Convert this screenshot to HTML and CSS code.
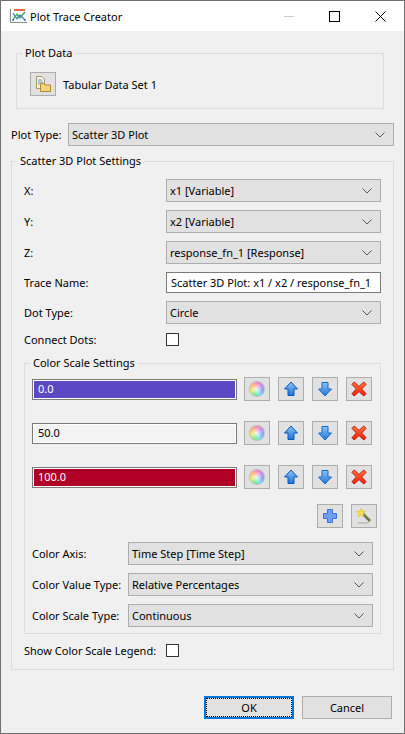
FILE: index.html
```html
<!DOCTYPE html>
<html lang="en">
<head>
<meta charset="utf-8">
<title>Plot Trace Creator</title>
<link rel="stylesheet" href="styles.css">
</head>
<body>
<svg class="defs" width="0" height="0" aria-hidden="true">
  <defs>
    <linearGradient id="blue" x1="0" y1="0" x2="0" y2="1"><stop offset="0" stop-color="#8cc4f4"/><stop offset="1" stop-color="#1e76d8"/></linearGradient>
    <linearGradient id="red" x1="0" y1="0" x2="0" y2="1"><stop offset="0" stop-color="#ff7a3c"/><stop offset="1" stop-color="#f01a08"/></linearGradient>
    <symbol id="up" viewBox="0 0 16 16"><path d="M8 1 L14.5 8 H11 V14.5 H5 V8 H1.5 Z" fill="url(#blue)" stroke="#0a55b8" stroke-width="1"/></symbol>
    <symbol id="down" viewBox="0 0 16 16"><path d="M5 1.5 H11 V8 H14.5 L8 15 L1.5 8 H5 Z" fill="url(#blue)" stroke="#1668c8" stroke-width="1"/></symbol>
    <symbol id="del" viewBox="0 0 16 16"><path d="M3.2 1 L8 5.4 L12.8 1 L15 3.4 L10.6 8 L15 12.6 L12.8 15 L8 10.6 L3.2 15 L1 12.6 L5.4 8 L1 3.4 Z" fill="url(#red)" stroke="#c01808" stroke-width="1"/></symbol>
    <symbol id="chev" viewBox="0 0 10 6"><path d="M0.5 0.5 L5 5 L9.5 0.5" fill="none" stroke="#555" stroke-width="1"/></symbol>
  </defs>
</svg>
<div class="window">
  <header class="titlebar">
    <svg class="appicon" viewBox="0 0 17 16" width="17" height="16">
      <path d="M0.5 1 V14.5 H17" fill="none" stroke="#8a8a8a"/>
      <path d="M3 12 L7 6 L10 10 L15 4" fill="none" stroke="#3fa34d" stroke-width="1.3"/>
      <path d="M3 5 L7 11 L10 7 L15 12" fill="none" stroke="#3f82d0" stroke-width="1.3"/>
      <path d="M4 2 H15" stroke="#e0442c" stroke-width="1.6"/>
      <circle cx="3" cy="12" r="1" fill="#2f78c8"/>
      <circle cx="8.5" cy="8.5" r="1" fill="#3fa34d"/>
      <circle cx="15" cy="12" r="1" fill="#2f78c8"/>
    </svg>
    <span class="title">Plot Trace Creator</span>
    <svg class="winbtn min" viewBox="0 0 10 10" width="10" height="10"><path d="M0 5.5 H10" stroke="#ccc"/></svg>
    <svg class="winbtn max" viewBox="0 0 11 11" width="11" height="11"><rect x="0.5" y="0.5" width="10" height="10" fill="none" stroke="#000"/></svg>
    <svg class="winbtn close" viewBox="0 0 11 11" width="11" height="11"><path d="M0.5 0.5 L10.5 10.5 M10.5 0.5 L0.5 10.5" stroke="#000" fill="none"/></svg>
  </header>

  <main class="content">
    <section class="group data-group">
      <span class="legend">Plot Data</span>
      <div class="data-row">
        <button class="btn">
          <svg viewBox="0 0 16 16" width="16" height="16">
            <path d="M1.5 0.5 H7 L9.5 3 V12.5 H1.5 Z" fill="#f6f2e6" stroke="#a89868"/>
            <path d="M3 4 H7 M3 6 H8 M3 8 H6" stroke="#6a94c8"/>
            <path d="M5.5 7.5 H9 L10 9 H15.5 V15.5 H5.5 Z" fill="#f6d27a" stroke="#b8862c"/>
          </svg>
        </button>
        <span>Tabular Data Set 1</span>
      </div>
    </section>

    <div class="type-row">
      <span class="type-label">Plot Type:</span>
      <div class="combo grow"><span>Scatter 3D Plot</span><svg class="chev"><use href="#chev"/></svg></div>
    </div>

    <section class="group settings">
      <span class="legend">Scatter 3D Plot Settings</span>
      <div class="form">
        <span>X:</span>
        <div class="combo"><span>x1 [Variable]</span><svg class="chev"><use href="#chev"/></svg></div>
        <span>Y:</span>
        <div class="combo"><span>x2 [Variable]</span><svg class="chev"><use href="#chev"/></svg></div>
        <span>Z:</span>
        <div class="combo"><span>response_fn_1 [Response]</span><svg class="chev"><use href="#chev"/></svg></div>
        <span>Trace Name:</span>
        <div class="textbox">Scatter 3D Plot: x1 / x2 / response_fn_1</div>
        <span>Dot Type:</span>
        <div class="combo"><span>Circle</span><svg class="chev"><use href="#chev"/></svg></div>
        <span>Connect Dots:</span>
        <div class="check"></div>
      </div>

      <section class="group scale">
        <span class="legend">Color Scale Settings</span>
        <div class="stops">
          <div class="stop">
            <div class="swatch purple">0.0</div>
            <button class="btn"><i class="wheel"></i></button>
            <button class="btn"><svg class="ico"><use href="#up"/></svg></button>
            <button class="btn"><svg class="ico"><use href="#down"/></svg></button>
            <button class="btn"><svg class="ico"><use href="#del"/></svg></button>
          </div>
          <div class="stop">
            <div class="swatch plain">50.0</div>
            <button class="btn"><i class="wheel"></i></button>
            <button class="btn"><svg class="ico"><use href="#up"/></svg></button>
            <button class="btn"><svg class="ico"><use href="#down"/></svg></button>
            <button class="btn"><svg class="ico"><use href="#del"/></svg></button>
          </div>
          <div class="stop">
            <div class="swatch crimson">100.0</div>
            <button class="btn"><i class="wheel"></i></button>
            <button class="btn"><svg class="ico"><use href="#up"/></svg></button>
            <button class="btn"><svg class="ico"><use href="#down"/></svg></button>
            <button class="btn"><svg class="ico"><use href="#del"/></svg></button>
          </div>
        </div>
        <div class="scale-actions">
          <button class="btn">
            <svg viewBox="0 0 16 16" width="16" height="16"><path d="M5.5 1.5 H10.5 V5.5 H14.5 V10.5 H10.5 V14.5 H5.5 V10.5 H1.5 V5.5 H5.5 Z" fill="#6c9ff0" stroke="#3c72d8"/></svg>
          </button>
          <button class="btn">
            <svg viewBox="0 0 16 16" width="16" height="16">
              <path d="M2 15 H13" stroke="#bdbdb0" stroke-width="1.5"/>
              <path d="M7 6 L14 13" stroke="#75754a" stroke-width="2.6"/>
              <path d="M5 0.5 L6.3 3.2 L9.3 3.5 L7.1 5.6 L7.7 8.5 L5 7.1 L2.3 8.5 L2.9 5.6 L0.7 3.5 L3.7 3.2 Z" fill="#fae04a" stroke="#e8b820" stroke-width="0.6"/>
            </svg>
          </button>
        </div>
        <div class="axis-form">
          <span>Color Axis:</span>
          <div class="combo"><span>Time Step [Time Step]</span><svg class="chev"><use href="#chev"/></svg></div>
          <span>Color Value Type:</span>
          <div class="combo"><span>Relative Percentages</span><svg class="chev"><use href="#chev"/></svg></div>
          <span>Color Scale Type:</span>
          <div class="combo"><span>Continuous</span><svg class="chev"><use href="#chev"/></svg></div>
        </div>
      </section>

      <div class="legend-row">
        <span>Show Color Scale Legend:</span>
        <div class="check"></div>
      </div>
    </section>

    <footer class="actions">
      <button class="btn wide default"><span class="focus">OK</span></button>
      <button class="btn wide">Cancel</button>
    </footer>
  </main>
</div>
</body>
</html>
```

FILE: styles.css
```css
* { box-sizing: border-box; }
html, body { margin: 0; padding: 0; }
body {
  width: 405px;
  height: 734px;
  overflow: hidden;
  font-family: "Noto Sans", "Open Sans", sans-serif;
  font-size: 11px;
  line-height: 15px;
  color: #000;
  background: #f0f0f0;
}
.defs { display: block; height: 0; }
.window {
  width: 405px;
  height: 734px;
  border: 1px solid #707070;
  background: #f0f0f0;
}
.titlebar {
  height: 30px;
  background: #fff;
  display: flex;
  align-items: center;
  padding-left: 9px;
}
.title { margin-left: 3px; flex: 1; }
.appicon { flex: none; }
.winbtn { flex: none; }
.min { margin-right: 35px; }
.max { margin-right: 35px; }
.close { margin-right: 18px; }

.content { padding-top: 22px; padding-left: 10px; }

.group {
  position: relative;
  border: 1px solid #dcdcdc;
}
.legend {
  position: absolute;
  top: -9px;
  left: 5px;
  padding: 0 3px;
  background: #f0f0f0;
  line-height: 15px;
  white-space: nowrap;
}
.data-group {
  width: 368px;
  height: 56px;
  margin-left: 5px;
  padding: 18px 0 0 13px;
}
.data-row { display: flex; align-items: center; gap: 7px; }

.btn {
  flex: none;
  width: 26px;
  height: 24px;
  padding: 0;
  border: 1px solid #adadad;
  background: #e1e1e1;
  display: flex;
  align-items: center;
  justify-content: center;
  font: inherit;
  color: inherit;
}
.ico { width: 16px; height: 16px; }

.combo {
  height: 23px;
  border: 1px solid #adadad;
  background: #e1e1e1;
  display: flex;
  align-items: center;
  justify-content: space-between;
  padding: 0 8px 1px 3px;
  min-width: 0;
}
.grow { flex: 1; }
.chev { width: 10px; height: 6px; flex: none; margin-top: 1px; }

.type-row {
  display: flex;
  align-items: center;
  width: 383px;
  margin-top: 14px;
}
.type-label { width: 57px; flex: none; }

.settings {
  width: 383px;
  height: 509px;
  margin-top: 15px;
  padding: 17px 12px 0 12px;
}
.form {
  display: grid;
  grid-template-columns: 142px 215px;
  row-gap: 8px;
  align-items: center;
}
.textbox {
  height: 21px;
  border: 1px solid #7a7a7a;
  background: #fff;
  display: flex;
  align-items: center;
  padding: 0 4px 1px 4px;
  white-space: nowrap;
  overflow: hidden;
}
.check {
  width: 13px;
  height: 13px;
  border: 1px solid #333;
  background: #fff;
}

.scale {
  width: 357px;
  height: 271px;
  margin-top: 16px;
  padding: 13px 0 0 7px;
}
.stops { display: flex; flex-direction: column; gap: 20px; }
.stop { display: flex; align-items: center; gap: 8px; }
.swatch {
  width: 205px;
  height: 21px;
  margin-right: -1px;
  border: 1px solid #7a7a7a;
  display: flex;
  align-items: center;
  padding: 0 5px 1px;
}
.purple { background: #5a49c2; color: #fff; box-shadow: inset 0 0 0 1px #fff; }
.plain { background: #f3f3f3; color: #000; box-shadow: inset 0 0 0 1px #fff; }
.crimson { background: #b00027; color: #fff; box-shadow: inset 0 0 0 1px #fff; }
.wheel {
  display: block;
  width: 14px;
  height: 14px;
  border-radius: 50%;
  background:
    radial-gradient(circle, rgba(255,255,255,.9) 0, rgba(255,255,255,.15) 70%, rgba(255,255,255,0) 100%),
    conic-gradient(#ff5f9e, #b060f0, #5a80f8, #40d8e0, #60e070, #f0e040, #ffa040, #ff5f9e);
  box-shadow: 0 0 0 1px rgba(150,150,150,.45);
}
.scale-actions {
  display: flex;
  justify-content: flex-end;
  gap: 8px;
  margin-top: 15px;
  padding-right: 3px;
}
.axis-form {
  display: grid;
  grid-template-columns: 96px 245px;
  row-gap: 8px;
  align-items: center;
  margin-top: 14px;
}
.legend-row {
  display: flex;
  align-items: center;
  margin-top: 9px;
}
.legend-row > span { width: 142px; flex: none; }

.actions {
  display: flex;
  gap: 8px;
  width: 381px;
  justify-content: flex-end;
  margin-top: 26px;
}
.wide { width: 90px; height: 23px; }
.default { border: 2px solid #0078d7; padding: 0; }
.focus {
  display: flex;
  align-items: center;
  justify-content: center;
  width: 100%;
  height: 100%;
  border: 1px dotted #000;
}
```
